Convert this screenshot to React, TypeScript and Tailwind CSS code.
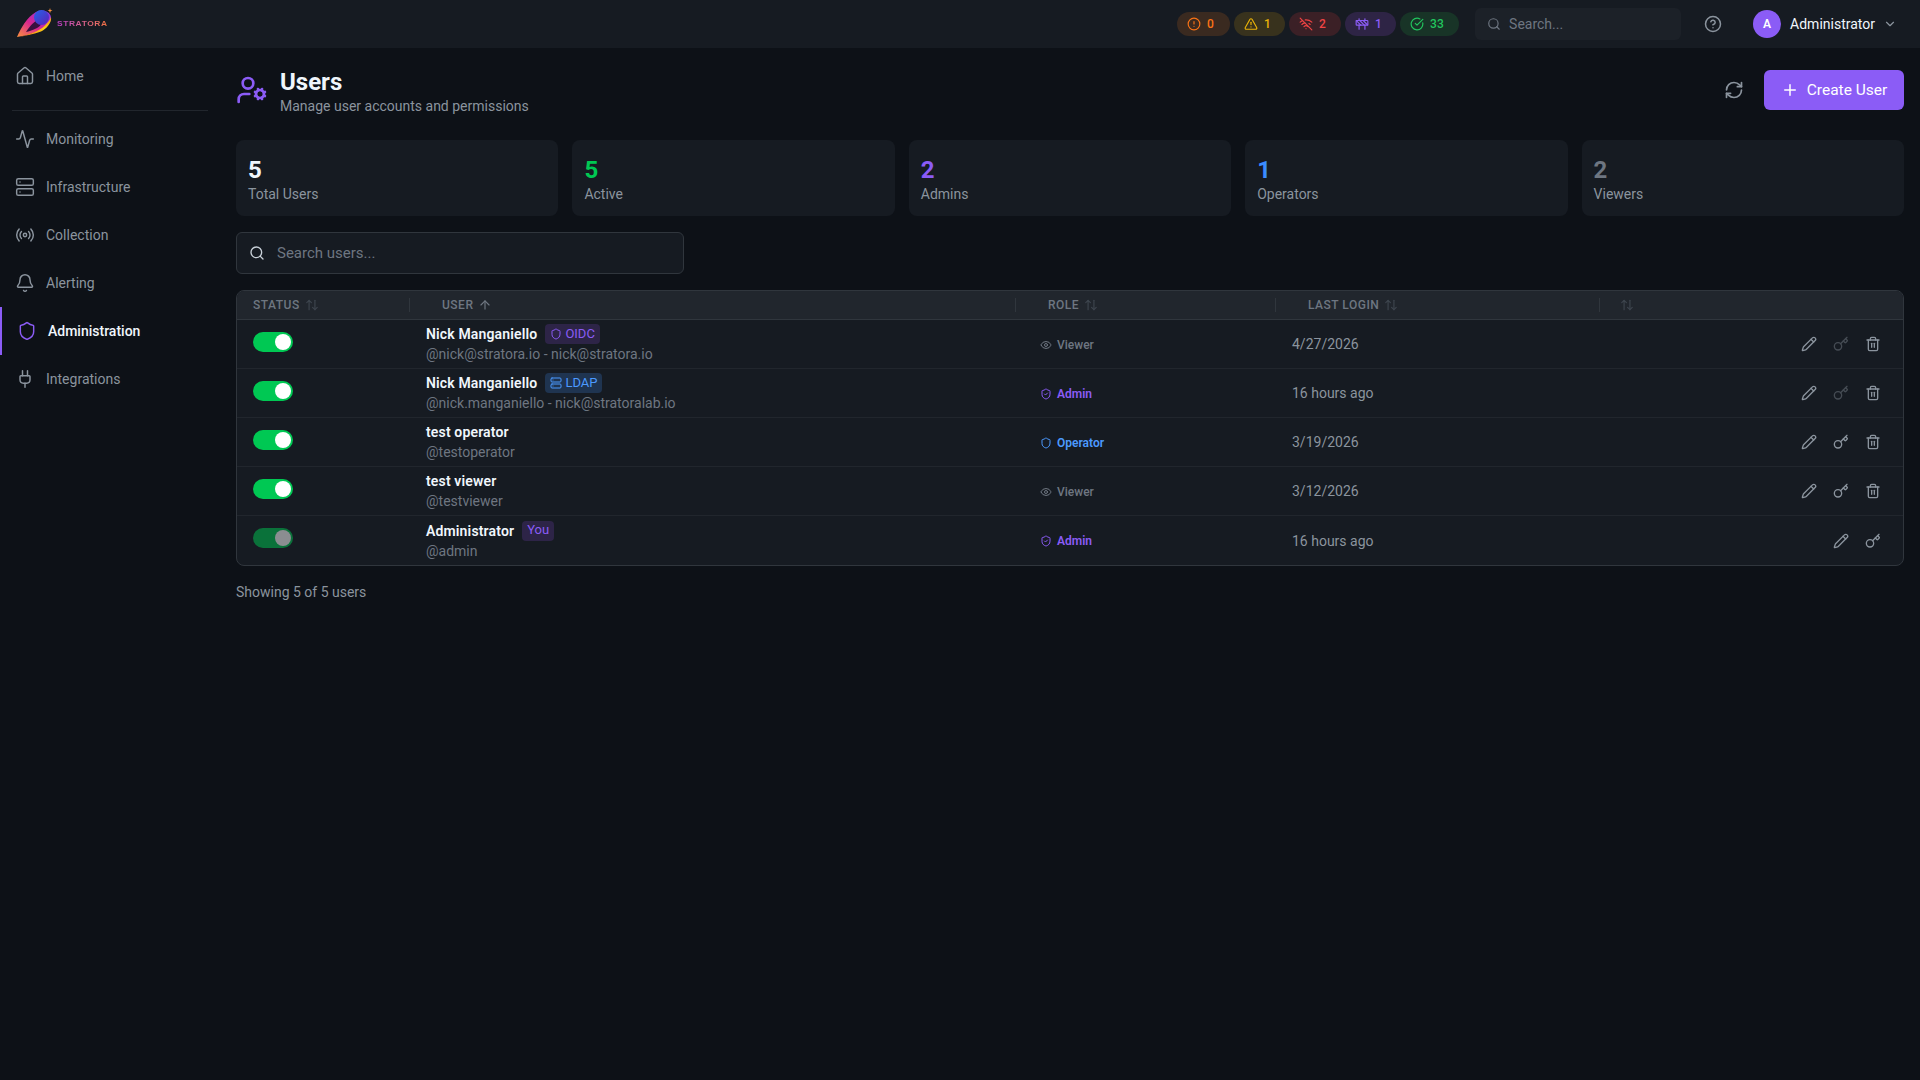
import {
  Activity,
  ArrowUp,
  ArrowUpDown,
  Bell,
  ChevronDown,
  CircleAlert,
  CircleCheckBig,
  CircleHelp,
  Construction,
  Eye,
  House,
  Key,
  Pencil,
  Plug,
  Plus,
  Radio,
  RefreshCw,
  Search,
  Server,
  Shield,
  ShieldCheck,
  Trash2,
  TriangleAlert,
  UserCog,
  WifiOff,
} from 'lucide-react';

const navItems = [
  { label: 'Monitoring', icon: Activity },
  { label: 'Infrastructure', icon: Server },
  { label: 'Collection', icon: Radio },
  { label: 'Alerting', icon: Bell },
  { label: 'Administration', icon: Shield, active: true },
  { label: 'Integrations', icon: Plug },
];

const pills = [
  { icon: CircleAlert, count: 0, cls: 'w-[53px] bg-[#3a2a20] text-[#f97316]' },
  { icon: TriangleAlert, count: 1, cls: 'w-[51px] bg-[#38321d] text-[#eab308]' },
  { icon: WifiOff, count: 2, cls: 'w-[52px] bg-[#3b2026] text-[#ef4444]' },
  { icon: Construction, count: 1, cls: 'w-[51px] bg-[#2e2445] text-[#8b5cf6]' },
  { icon: CircleCheckBig, count: 33, cls: 'w-[59px] bg-[#183427] text-[#22c55e]' },
];

const stats = [
  { value: 5, label: 'Total Users', cls: 'text-[#f0f6fc]' },
  { value: 5, label: 'Active', cls: 'text-[#00c853]' },
  { value: 2, label: 'Admins', cls: 'text-[#8b5cf6]' },
  { value: 1, label: 'Operators', cls: 'text-[#3b8cff]' },
  { value: 2, label: 'Viewers', cls: 'text-[#6e7681]' },
];

const users = [
  {
    name: 'Nick Manganiello',
    sub: '@nick@stratora.io - nick@stratora.io',
    badge: 'oidc',
    role: 'viewer',
    login: '4/27/2026',
    keyDisabled: true,
  },
  {
    name: 'Nick Manganiello',
    sub: '@nick.manganiello - nick@stratoralab.io',
    badge: 'ldap',
    role: 'admin',
    login: '16 hours ago',
    keyDisabled: true,
  },
  { name: 'test operator', sub: '@testoperator', role: 'operator', login: '3/19/2026' },
  { name: 'test viewer', sub: '@testviewer', role: 'viewer', login: '3/12/2026' },
  { name: 'Administrator', sub: '@admin', badge: 'you', role: 'admin', login: '16 hours ago', self: true },
];

const rowGrid = 'grid grid-cols-[173px_606px_260px_324px_1fr]';

function Logo() {
  return (
    <div className="flex items-center gap-[3px]">
      <svg width="38" height="32" viewBox="0 0 38 32" className="mt-[-2px]">
        <defs>
          <linearGradient id="body" x1="0" y1="1" x2="1" y2="0">
            <stop offset="0" stopColor="#fb923c" />
            <stop offset="0.45" stopColor="#d9268f" />
            <stop offset="1" stopColor="#7c3aed" />
          </linearGradient>
          <linearGradient id="swoosh" x1="0" y1="1" x2="1" y2="0">
            <stop offset="0" stopColor="#f97316" />
            <stop offset="0.6" stopColor="#facc15" />
            <stop offset="1" stopColor="#f59e0b" />
          </linearGradient>
          <linearGradient id="planet" x1="0" y1="0" x2="1" y2="1">
            <stop offset="0" stopColor="#2563eb" />
            <stop offset="1" stopColor="#5b21b6" />
          </linearGradient>
        </defs>
        <path d="M1 30C5 21 11 10 20 5C26 2 34 4 35 10C36 15 30 21 24 23.5C16 27 8 29 1 30Z" fill="url(#body)" />
        <path d="M10 25C14 19 18 14 24 12C28 15 24 20 20 21.5C16 23.5 13 24.5 10 25Z" fill="#3a1040" />
        <circle cx="25.5" cy="10.5" r="7.5" fill="url(#planet)" />
        <path d="M2 30C12 28 23 24.5 29 18.5C32 15.5 34 13 35 10C36 16 30 22 25 24.5C17 27.5 8 29 2 30Z" fill="url(#swoosh)" />
        <path d="M34 1L34.6 3L36.5 3.6L34.6 4.2L34 6.2L33.4 4.2L31.5 3.6L33.4 3Z" fill="#fb923c" />
      </svg>
      <span className="origin-left [transform:scaleX(1.2)] bg-gradient-to-r from-[#b93bc4] to-[#f0703c] bg-clip-text font-['Liberation_Sans',sans-serif] text-[7px] font-bold tracking-[0.5px] text-transparent">
        STRATORA
      </span>
    </div>
  );
}

function TopBar() {
  return (
    <header className="flex h-12 shrink-0 items-center bg-[#161b22] pl-4 pr-[23px]">
      <Logo />
      <div className="ml-auto flex items-center gap-1">
        {pills.map((p, i) => (
          <div key={i} className={`flex h-6 items-center gap-[6px] rounded-full pl-[10px] text-xs font-medium ${p.cls}`}>
            <p.icon size={14} />
            <span>{p.count}</span>
          </div>
        ))}
      </div>
      <div className="ml-4 flex h-8 w-[206px] items-center gap-2 rounded-md bg-[#1c2128] pl-3 text-sm text-[#6e7681]">
        <Search size={14} />
        <span>Search...</span>
      </div>
      <CircleHelp size={18} className="ml-[23px] text-[#8b949e]" />
      <div className="ml-[31px] flex h-7 w-7 items-center justify-center rounded-full bg-[#8b5cf6] text-xs font-semibold text-white">
        A
      </div>
      <span className="ml-[9px] text-sm text-[#f0f6fc]">Administrator</span>
      <ChevronDown size={14} className="ml-[8px] text-[#8b949e]" />
    </header>
  );
}

function Sidebar() {
  return (
    <aside className="w-[220px] shrink-0 pt-1 text-sm text-[#8b949e]">
      <div className="flex h-12 items-center gap-[11px] pl-[15px]">
        <House size={20} strokeWidth={1.75} />
        <span>Home</span>
      </div>
      <div className="mx-3 mb-[4px] mt-[10px] h-px w-[196px] bg-[#21262d]" />
      {navItems.map((item) =>
        item.active ? (
          <div key={item.label} className="flex h-12 items-center gap-[11px] border-l-2 border-[#8b5cf6] pl-[15px] font-medium text-[#f0f6fc]">
            <item.icon size={20} strokeWidth={1.75} className="text-[#8b5cf6]" />
            <span>{item.label}</span>
          </div>
        ) : (
          <div key={item.label} className="flex h-12 items-center gap-[11px] pl-[15px]">
            <item.icon size={20} strokeWidth={1.75} />
            <span>{item.label}</span>
          </div>
        )
      )}
    </aside>
  );
}

function SortHead({ label, pad = 'pl-8', active }: { label?: string; pad?: string; active?: boolean }) {
  return (
    <div className={`flex items-center gap-[5px] border-r border-[#30363d] ${pad} my-[6px] h-[14px] text-xs font-medium uppercase tracking-[0.5px] text-[#6e7681]`}>
      {label && <span>{label}</span>}
      {active ? <ArrowUp size={14} /> : <ArrowUpDown size={14} className="text-[#3d444d]" />}
    </div>
  );
}

function Badge({ kind }: { kind: string }) {
  if (kind === 'oidc') {
    return (
      <span className="flex h-5 items-center gap-[3px] rounded bg-[#2d2447] px-[5px] text-[13px] text-[#8b5cf6]">
        <Shield size={12} /> OIDC
      </span>
    );
  }
  if (kind === 'ldap') {
    return (
      <span className="flex h-5 items-center gap-[3px] rounded bg-[#1f3450] px-[5px] text-[13px] text-[#4c9aff]">
        <Server size={12} /> LDAP
      </span>
    );
  }
  return <span className="flex h-5 items-center rounded bg-[#2d2447] px-[5px] text-[13px] text-[#8b5cf6]">You</span>;
}

function Role({ role }: { role: string }) {
  if (role === 'admin') {
    return (
      <div className="flex items-center gap-[5px] pt-px text-xs font-semibold text-[#8b5cf6]">
        <ShieldCheck size={12} /> Admin
      </div>
    );
  }
  if (role === 'operator') {
    return (
      <div className="flex items-center gap-[5px] pt-px text-xs font-semibold text-[#4c9aff]">
        <Shield size={12} /> Operator
      </div>
    );
  }
  return (
    <div className="flex items-center gap-[5px] pt-px text-xs font-medium text-[#6e7681]">
      <Eye size={12} /> Viewer
    </div>
  );
}

function UsersTable() {
  return (
    <div className="mt-4 overflow-hidden rounded-lg border border-[#30363d] bg-[#161b22]">
      <div className={`${rowGrid} h-[29px] items-center border-b border-[#30363d] bg-[#21262d]`}>
        <SortHead label="Status" pad="pl-4" />
        <SortHead label="User" active />
        <SortHead label="Role" />
        <SortHead label="Last Login" />
        <div className="pl-5 text-[#3d444d]">
          <ArrowUpDown size={14} />
        </div>
      </div>
      {users.map((u, i) => (
        <div key={i} className={`${rowGrid} h-[49px] items-center ${i < users.length - 1 ? 'border-b border-[#21262d]' : ''}`}>
          <div className="pl-4">
            <div className={`mt-[-5px] flex h-5 w-10 items-center justify-end rounded-full bg-[#00c853] pr-[2px] ${u.self ? 'opacity-50' : ''}`}>
              <div className="h-4 w-4 rounded-full bg-white" />
            </div>
          </div>
          <div className="pl-4">
            <div className="flex h-5 items-center gap-2 text-sm font-semibold tracking-[0.15px] text-[#f0f6fc]">
              {u.name}
              {u.badge && <span className="font-normal tracking-normal"><Badge kind={u.badge} /></span>}
            </div>
            <div className="text-sm leading-5 text-[#6e7681]">{u.sub}</div>
          </div>
          <div className="pl-6">
            <Role role={u.role} />
          </div>
          <div className="pl-[16px] text-sm text-[#8b949e]">{u.login}</div>
          <div className="flex items-center justify-end gap-4 pr-[22px] text-[#8b949e]">
            <Pencil size={16} />
            <Key size={16} className={u.keyDisabled ? 'opacity-40' : ''} />
            {!u.self && <Trash2 size={16} />}
          </div>
        </div>
      ))}
    </div>
  );
}

export default function App() {
  return (
    <div className="flex h-screen min-h-screen flex-col overflow-hidden bg-[#0d1117] font-['Roboto',sans-serif] text-[#f0f6fc]">
      <TopBar />
      <div className="flex flex-1">
        <Sidebar />
        <main className="flex-1 pl-4 pr-4 pt-[22px]">
          <div className="flex h-10 items-center">
            <UserCog size={32} strokeWidth={2} className="text-[#8b5cf6]" />
            <div className="ml-3 pt-[5px]">
              <h1 className="text-2xl leading-[27px] font-bold">Users</h1>
              <p className="text-sm leading-5 text-[#8b949e]">Manage user accounts and permissions</p>
            </div>
            <RefreshCw size={20} className="ml-auto mr-5 text-[#8b949e]" />
            <button className="flex h-10 w-[140px] items-center justify-center gap-2 rounded-md bg-[#8b5cf6] text-[15.5px] font-normal text-white">
              <Plus size={18} />
              <span className="pt-px">Create User</span>
            </button>
          </div>
          <div className="mt-[30px] grid grid-cols-5 gap-[14px]">
            {stats.map((s) => (
              <div key={s.label} className="h-[76px] rounded-lg bg-[#161b22] px-3 pt-4">
                <div className={`text-2xl leading-7 font-bold ${s.cls}`}>{s.value}</div>
                <div className="text-sm leading-5 text-[#8b949e]">{s.label}</div>
              </div>
            ))}
          </div>
          <div className="mt-4 flex h-[42px] w-[448px] items-center gap-[12px] rounded-md border border-[#30363d] bg-[#161b22] pl-3 text-[#6e7681]">
            <Search size={16} className="text-[#c9d1d9]" />
            <span className="pt-px text-[15px]">Search users...</span>
          </div>
          <UsersTable />
          <p className="mt-4 text-sm leading-5 text-[#8b949e]">Showing 5 of 5 users</p>
        </main>
      </div>
    </div>
  );
}
